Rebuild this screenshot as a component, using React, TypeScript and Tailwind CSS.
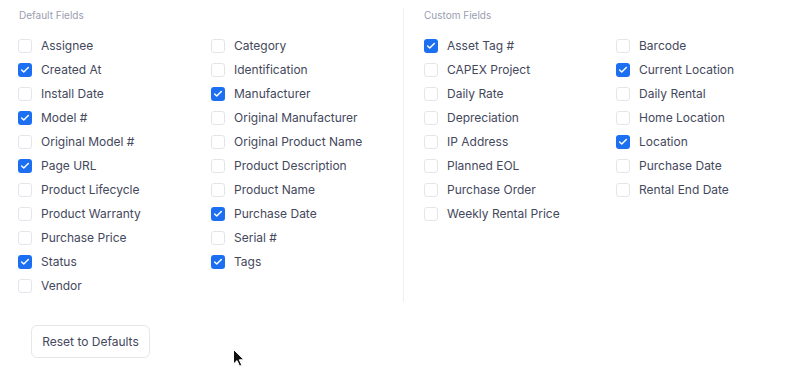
import { Check } from "lucide-react";

type Field = { label: string; checked: boolean };

const defaultLeft: Field[] = [
  { label: "Assignee", checked: false },
  { label: "Created At", checked: true },
  { label: "Install Date", checked: false },
  { label: "Model #", checked: true },
  { label: "Original Model #", checked: false },
  { label: "Page URL", checked: true },
  { label: "Product Lifecycle", checked: false },
  { label: "Product Warranty", checked: false },
  { label: "Purchase Price", checked: false },
  { label: "Status", checked: true },
  { label: "Vendor", checked: false },
];

const defaultRight: Field[] = [
  { label: "Category", checked: false },
  { label: "Identification", checked: false },
  { label: "Manufacturer", checked: true },
  { label: "Original Manufacturer", checked: false },
  { label: "Original Product Name", checked: false },
  { label: "Product Description", checked: false },
  { label: "Product Name", checked: false },
  { label: "Purchase Date", checked: true },
  { label: "Serial #", checked: false },
  { label: "Tags", checked: true },
];

const customLeft: Field[] = [
  { label: "Asset Tag #", checked: true },
  { label: "CAPEX Project", checked: false },
  { label: "Daily Rate", checked: false },
  { label: "Depreciation", checked: false },
  { label: "IP Address", checked: false },
  { label: "Planned EOL", checked: false },
  { label: "Purchase Order", checked: false },
  { label: "Weekly Rental Price", checked: false },
];

const customRight: Field[] = [
  { label: "Barcode", checked: false },
  { label: "Current Location", checked: true },
  { label: "Daily Rental", checked: false },
  { label: "Home Location", checked: false },
  { label: "Location", checked: true },
  { label: "Purchase Date", checked: false },
  { label: "Rental End Date", checked: false },
];

function FieldRow({ field }: { field: Field }) {
  return (
    <label className="flex h-[24px] items-center gap-[9px] cursor-pointer">
      {field.checked ? (
        <span className="flex h-[14px] w-[14px] items-center justify-center rounded-[3px] bg-[#1d6ff2]">
          <Check className="h-[10px] w-[10px] text-white" strokeWidth={3.5} />
        </span>
      ) : (
        <span className="h-[14px] w-[14px] rounded-[3px] border border-[#e3e5ea] bg-white" />
      )}
      <span className="text-[12px] text-[#44485c]">{field.label}</span>
    </label>
  );
}

function Column({ fields }: { fields: Field[] }) {
  return (
    <div className="flex flex-col">
      {fields.map((f) => (
        <FieldRow key={f.label} field={f} />
      ))}
    </div>
  );
}

export default function App() {
  return (
    <div
      className="relative h-[372px] w-[804px] bg-white"
      style={{ fontFamily: "Inter, 'Noto Sans', sans-serif" }}
    >
      <div className="flex pl-[18px] pt-[8px]">
        <div className="w-[386px] border-r border-[#eeeff1] pb-[4px]">
          <div className="h-[14px] pl-[1px] text-[10px] leading-[15px] text-[#9a9db0]">Default Fields</div>
          <div className="mt-[12px] grid grid-cols-[193px_193px]">
            <Column fields={defaultLeft} />
            <Column fields={defaultRight} />
          </div>
        </div>
        <div className="pl-[20px]">
          <div className="h-[14px] text-[10px] leading-[15px] text-[#9a9db0]">Custom Fields</div>
          <div className="mt-[12px] grid grid-cols-[192px_192px]">
            <Column fields={customLeft} />
            <Column fields={customRight} />
          </div>
        </div>
      </div>
      <div className="pl-[31px] pt-[23px]">
        <button className="h-[33px] w-[119px] rounded-[6px] border border-[#e6e7eb] bg-white text-[12px] text-[#44485c]">
          Reset to Defaults
        </button>
      </div>
      <svg
        className="absolute left-[232px] top-[348px]"
        width="14"
        height="20"
        viewBox="0 0 14 20"
      >
        <path d="M1.5 1.5 L1.5 16 L5 12.6 L7.6 18.2 L9.8 17.2 L7.3 11.8 L12 11.8 Z" fill="#111" stroke="#fff" strokeWidth="1" />
      </svg>
    </div>
  );
}
